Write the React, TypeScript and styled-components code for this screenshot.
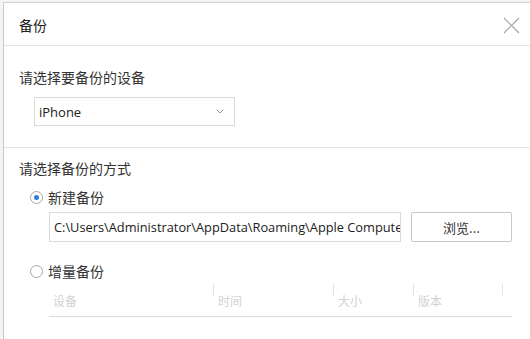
import React from "react";
import styled, { createGlobalStyle } from "styled-components";

const Global = createGlobalStyle`
  html, body { margin: 0; padding: 0; background: #f4f4f4; }
  body { font-family: "Noto Sans CJK SC", "Noto Sans", sans-serif; color: #333; }
`;

const Dialog = styled.div`
  margin: 2px 0 0 3px;
  height: 337px;
  background: #fff;
  border-top: 1px solid #cfcfcf;
  border-left: 1px solid #c8c8c8;
  display: flex;
  flex-direction: column;
  overflow: hidden;
`;

const Header = styled.div`
  height: 42px;
  display: flex;
  align-items: center;
  justify-content: space-between;
  padding: 0 10px 0 15px;
  border-bottom: 1px solid #e4e4e4;
`;

const Title = styled.div`
  font-size: 14px;
  line-height: 20px;
  color: #222;
  margin-top: 1px;
`;

const Close = styled.button`
  border: none;
  background: none;
  padding: 0;
  width: 17px;
  height: 17px;
  margin-top: 2px;
  display: flex;
`;

const Section = styled.div<{ $pt: number; $pb: number; $border?: boolean }>`
  padding: ${(p) => p.$pt}px 18px ${(p) => p.$pb}px 15px;
  border-bottom: ${(p) => (p.$border ? "1px solid #e4e4e4" : "none")};
  display: flex;
  flex-direction: column;
`;

const Label = styled.div`
  font-size: 14px;
  line-height: 20px;
  color: #333;
`;

const Select = styled.div`
  margin: 10px 0 0 15px;
  height: 27px;
  border: 1px solid #dadada;
  display: flex;
  align-items: center;
  justify-content: space-between;
  padding: 0 10px 0 4px;
  box-sizing: content-box;
  width: 185px;
  font-family: "Open Sans", "Noto Sans", sans-serif;
  font-size: 13px;
  color: #222;
`;

const RadioRow = styled.div<{ $mt: number }>`
  margin: ${(p) => p.$mt}px 0 0 11px;
  height: 20px;
  display: flex;
  align-items: center;
  gap: 5px;
  font-size: 14px;
  color: #333;
`;

const RadioCircle = styled.span<{ $on?: boolean }>`
  width: 11px;
  height: 11px;
  border-radius: 50%;
  border: 1px solid #a8a8a8;
  display: flex;
  align-items: center;
  justify-content: center;
  background: #fff;
  &::after {
    content: "";
    width: 5px;
    height: 5px;
    border-radius: 50%;
    background: ${(p) => (p.$on ? "#2b7fd6" : "transparent")};
  }
`;

const PathRow = styled.div`
  margin: 5px 0 0 30px;
  display: flex;
  gap: 10px;
`;

const PathInput = styled.div`
  width: 346px;
  height: 28px;
  border: 1px solid #dadada;
  padding: 0 0 0 4px;
  display: flex;
  align-items: center;
  white-space: nowrap;
  overflow: hidden;
  font-family: "Open Sans", "Noto Sans", sans-serif;
  font-size: 12.8px;
  color: #222;
`;

const PathText = styled.span`
  display: block;
  max-width: 100%;
  overflow: hidden;
`;

const Button = styled.button`
  width: 101px;
  height: 30px;
  border: 1px solid #c8c8c8;
  border-radius: 2px;
  background: #fff;
  font-family: "Noto Sans CJK SC", sans-serif;
  font-size: 13px;
  color: #333;
  padding: 0;
`;

const Table = styled.div`
  margin: 1px 0 0 30px;
  width: 463px;
  height: 34px;
  border-bottom: 1px solid #dcdcdc;
  display: grid;
  grid-template-columns: 164px 120px 80px 89px 10px;
`;

const Th = styled.div<{ $sep?: boolean }>`
  position: relative;
  padding: 12px 0 0 ${(p) => (p.$sep ? 5 : 4)}px;
  font-size: 12px;
  line-height: 14px;
  color: #d2d2d2;
  &::before {
    content: "";
    display: ${(p) => (p.$sep ? "block" : "none")};
    position: absolute;
    left: 0;
    top: 1px;
    width: 1px;
    height: 13px;
    background: #e6e6e6;
  }
`;

const Chevron = () => (
  <svg width="8" height="5" viewBox="0 0 8 5">
    <path d="M0.5 0.5 L4 4 L7.5 0.5" fill="none" stroke="#9a9a9a" strokeWidth="1" />
  </svg>
);

export default function App() {
  return (
    <>
      <Global />
      <Dialog>
        <Header>
          <Title>备份</Title>
          <Close aria-label="关闭">
            <svg width="17" height="17" viewBox="0 0 17 17">
              <path d="M1 1 L16 16 M16 1 L1 16" stroke="#a3a3a3" strokeWidth="1.1" fill="none" />
            </svg>
          </Close>
        </Header>
        <Section $pt={21} $pb={21} $border>
          <Label>请选择要备份的设备</Label>
          <Select>
            <span>iPhone</span>
            <Chevron />
          </Select>
        </Section>
        <Section $pt={10} $pb={0}>
          <Label>请选择备份的方式</Label>
          <RadioRow $mt={9}>
            <RadioCircle $on />
            新建备份
          </RadioRow>
          <PathRow>
            <PathInput>
              <PathText>C:\Users\Administrator\AppData\Roaming\Apple Computer\MobileSync\Backup</PathText>
            </PathInput>
            <Button>浏览...</Button>
          </PathRow>
          <RadioRow $mt={19}>
            <RadioCircle />
            增量备份
          </RadioRow>
          <Table>
            <Th>设备</Th>
            <Th $sep>时间</Th>
            <Th $sep>大小</Th>
            <Th $sep>版本</Th>
            <Th $sep />
          </Table>
        </Section>
      </Dialog>
    </>
  );
}
